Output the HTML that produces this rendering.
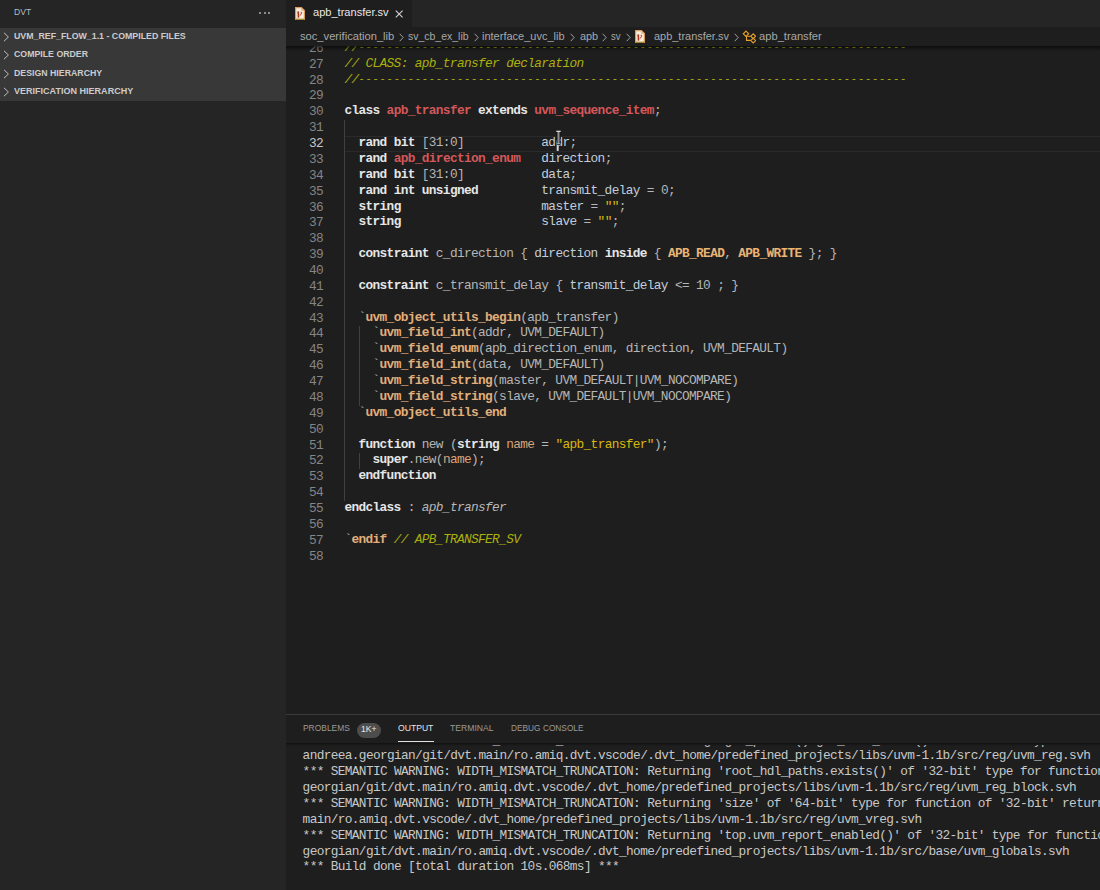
<!DOCTYPE html><html><head><meta charset="utf-8"><style>
*{box-sizing:border-box}
html,body{margin:0;padding:0}
body{width:1100px;height:890px;overflow:hidden;background:#1e1e1e;position:relative;font-family:"Liberation Sans",sans-serif}
.abs{position:absolute}
.ui{position:absolute;white-space:pre;transform-origin:0 0;line-height:1}
#side{left:0;top:0;width:286px;height:890px;background:#252526}
#secs{left:0;top:28px;width:286px;height:73px;background:#383838}
#tabs{left:286px;top:0;width:814px;height:27px;background:#252526}
#tab{left:286px;top:0;width:125.5px;height:27px;background:#1e1e1e}
#crumb{left:286px;top:27px;width:814px;height:19px;background:#1e1e1e}
#ed{left:286px;top:46px;width:814px;height:668px;overflow:hidden;background:#1e1e1e}
.ln{position:absolute;left:0;width:37px;text-align:right;font-family:"Liberation Mono",monospace;font-size:12.8px;letter-spacing:-0.6472px;color:#858585;height:15.87px;line-height:15.87px}
.cl{position:absolute;left:58.39999999999998px;white-space:pre;font-family:"Liberation Mono",monospace;font-size:12.8px;letter-spacing:-0.6472px;height:15.87px;line-height:15.87px;color:#bcbcbc}
.k{color:#e6e6e6;font-weight:bold}
.t{color:#d4575a;font-weight:bold}
.c{color:#abb00e;font-style:italic}
.m{color:#e2af7a;font-weight:bold}
.p{color:#b6b6b6}
.v{color:#c2cedb}
.s{color:#d8b80c}
.n{color:#d8a47c}
.e{color:#eab474;font-weight:bold}
.i{color:#b8b8b8;font-style:italic}
.d{font-size:10.5px;letter-spacing:0.7331px;font-style:normal;position:relative;top:-0.6px}
#panel{left:286px;top:714px;width:814px;height:176px;background:#1e1e1e;border-top:1px solid #3c3c3c}
#out{left:286px;top:744.5px;width:814px;height:145.5px;overflow:hidden}
.ol{position:absolute;left:16.6px;white-space:pre;font-family:"Liberation Mono",monospace;font-size:12.8px;letter-spacing:-0.6472px;height:15.87px;line-height:15.87px;color:#c8c8c8}
.shadow{position:absolute;left:286px;width:814px;height:5px;background:linear-gradient(#00000090,#00000000)}
</style></head><body>
<div id="side" class="abs"></div>
<div class="ui" style="left:13.6px;top:7.1px;font-size:9.4px;font-weight:400;color:#bbbbbb;transform:scaleX(0.9149);">DVT</div>
<div class="abs" style="left:259.2px;top:12.1px;width:1.9px;height:1.9px;background:#acacac;border-radius:1px"></div>
<div class="abs" style="left:263.7px;top:12.1px;width:1.9px;height:1.9px;background:#acacac;border-radius:1px"></div>
<div class="abs" style="left:268.2px;top:12.1px;width:1.9px;height:1.9px;background:#acacac;border-radius:1px"></div>
<div id="secs" class="abs"></div>
<svg class="abs" style="left:2.6px;top:31.90px" width="7" height="10" viewBox="0 0 7 10"><path d="M1 0.8 L5.4 5 L1 9.2" fill="none" stroke="#c0c0c0" stroke-width="1"/></svg>
<div class="ui" style="left:13.6px;top:30.9px;font-size:9.6px;font-weight:700;color:#cccccc;transform:scaleX(0.9176);">UVM_REF_FLOW_1.1 - COMPILED FILES</div>
<svg class="abs" style="left:2.6px;top:50.20px" width="7" height="10" viewBox="0 0 7 10"><path d="M1 0.8 L5.4 5 L1 9.2" fill="none" stroke="#c0c0c0" stroke-width="1"/></svg>
<div class="ui" style="left:13.6px;top:49.2px;font-size:9.6px;font-weight:700;color:#cccccc;transform:scaleX(0.9140);">COMPILE ORDER</div>
<svg class="abs" style="left:2.6px;top:68.50px" width="7" height="10" viewBox="0 0 7 10"><path d="M1 0.8 L5.4 5 L1 9.2" fill="none" stroke="#c0c0c0" stroke-width="1"/></svg>
<div class="ui" style="left:13.6px;top:67.5px;font-size:9.6px;font-weight:700;color:#cccccc;transform:scaleX(0.9135);">DESIGN HIERARCHY</div>
<svg class="abs" style="left:2.6px;top:86.80px" width="7" height="10" viewBox="0 0 7 10"><path d="M1 0.8 L5.4 5 L1 9.2" fill="none" stroke="#c0c0c0" stroke-width="1"/></svg>
<div class="ui" style="left:13.6px;top:85.80000000000001px;font-size:9.6px;font-weight:700;color:#cccccc;transform:scaleX(0.9411);">VERIFICATION HIERARCHY</div>
<div id="tabs" class="abs"></div>
<div id="tab" class="abs"></div>
<svg class="abs" style="left:295px;top:7px" width="10" height="13" viewBox="0 0 10 13"><path d="M0.6 0.6 H6.4 L9.4 3.6 V12.4 H0.6 Z" fill="#f6eddc" stroke="#dc9a58" stroke-width="1.2"/><path d="M6.2 0.8 V3.8 H9.2 Z" fill="#e6b482" stroke="none"/><path d="M3.3 4.6 L3.5 10.6" stroke="#a8301e" stroke-width="1.6" fill="none"/><path d="M2.3 5 H3.6" stroke="#b8402a" stroke-width="0.9" fill="none"/><path d="M5.6 5.3 Q7 4.9 6.7 6 L5.2 8.6" stroke="#c04030" stroke-width="1" fill="none"/><path d="M0.6 12.3 H9.4" stroke="#8a7a20" stroke-width="0.9"/></svg>
<div class="ui" style="left:312.6px;top:7.3px;font-size:10.6px;font-weight:400;color:#e8e8e8;transform:scaleX(1.0445);">apb_transfer.sv</div>
<svg class="abs" style="left:394.6px;top:9.6px" width="8.5" height="8" viewBox="0 0 8.5 8"><path d="M0.8 0.6 L7.6 7.4 M7.6 0.6 L0.8 7.4" stroke="#d0d0d0" stroke-width="1.15"/></svg>
<div id="crumb" class="abs"></div>
<div class="ui" style="left:299.6px;top:31.6px;font-size:10.2px;font-weight:400;color:#a8a8a8;transform:scaleX(1.0953);">soc_verification_lib</div>
<div class="ui" style="left:407.6px;top:31.6px;font-size:10.2px;font-weight:400;color:#a8a8a8;transform:scaleX(1.0277);">sv_cb_ex_lib</div>
<div class="ui" style="left:482.3px;top:31.6px;font-size:10.2px;font-weight:400;color:#a8a8a8;transform:scaleX(1.0803);">interface_uvc_lib</div>
<div class="ui" style="left:579.5px;top:31.6px;font-size:10.2px;font-weight:400;color:#a8a8a8;transform:scaleX(1.0691);">apb</div>
<div class="ui" style="left:611.4px;top:31.6px;font-size:10.2px;font-weight:400;color:#a8a8a8;transform:scaleX(0.9412);">sv</div>
<div class="ui" style="left:653.6px;top:31.6px;font-size:10.2px;font-weight:400;color:#a8a8a8;transform:scaleX(1.0754);">apb_transfer.sv</div>
<div class="ui" style="left:758.6px;top:31.6px;font-size:10.2px;font-weight:400;color:#a8a8a8;transform:scaleX(1.0963);">apb_transfer</div>
<svg class="abs" style="left:399.0px;top:32.5px" width="5" height="9" viewBox="0 0 5 9"><path d="M0.7 0.8 L4.2 4.5 L0.7 8.2" fill="none" stroke="#a0a0a0" stroke-width="1"/></svg>
<svg class="abs" style="left:473.6px;top:32.5px" width="5" height="9" viewBox="0 0 5 9"><path d="M0.7 0.8 L4.2 4.5 L0.7 8.2" fill="none" stroke="#a0a0a0" stroke-width="1"/></svg>
<svg class="abs" style="left:570.0px;top:32.5px" width="5" height="9" viewBox="0 0 5 9"><path d="M0.7 0.8 L4.2 4.5 L0.7 8.2" fill="none" stroke="#a0a0a0" stroke-width="1"/></svg>
<svg class="abs" style="left:602.4px;top:32.5px" width="5" height="9" viewBox="0 0 5 9"><path d="M0.7 0.8 L4.2 4.5 L0.7 8.2" fill="none" stroke="#a0a0a0" stroke-width="1"/></svg>
<svg class="abs" style="left:626.0px;top:32.5px" width="5" height="9" viewBox="0 0 5 9"><path d="M0.7 0.8 L4.2 4.5 L0.7 8.2" fill="none" stroke="#a0a0a0" stroke-width="1"/></svg>
<svg class="abs" style="left:734.0px;top:32.5px" width="5" height="9" viewBox="0 0 5 9"><path d="M0.7 0.8 L4.2 4.5 L0.7 8.2" fill="none" stroke="#a0a0a0" stroke-width="1"/></svg>
<svg class="abs" style="left:635px;top:30px" width="10" height="13" viewBox="0 0 10 13"><path d="M0.6 0.6 H6.4 L9.4 3.6 V12.4 H0.6 Z" fill="#f6eddc" stroke="#dc9a58" stroke-width="1.2"/><path d="M6.2 0.8 V3.8 H9.2 Z" fill="#e6b482" stroke="none"/><path d="M3.3 4.6 L3.5 10.6" stroke="#a8301e" stroke-width="1.6" fill="none"/><path d="M2.3 5 H3.6" stroke="#b8402a" stroke-width="0.9" fill="none"/><path d="M5.6 5.3 Q7 4.9 6.7 6 L5.2 8.6" stroke="#c04030" stroke-width="1" fill="none"/><path d="M0.6 12.3 H9.4" stroke="#8a7a20" stroke-width="0.9"/></svg>
<svg class="abs" style="left:742px;top:30px" width="14" height="14" viewBox="0 0 14 14"><g fill="none" stroke="#e8a02a" stroke-width="1.1"><path d="M4 1.1 L6.7 3.8 L4 6.5 L1.3 3.8 Z"/><path d="M11.2 3.8 L13.6 6.2 L11.2 8.6 L8.8 6.2 Z"/><path d="M11.2 8.2 L13.6 10.6 L11.2 13 L8.8 10.6 Z"/><path d="M4.5 6 V10.4 H8.8 M5.2 6.3 H8.8"/></g></svg>
<div id="ed" class="abs">
<div class="abs" style="left:59px;top:90.05px;width:760px;height:15.87px;border-top:1.5px solid #2a2a2a;border-bottom:1.5px solid #2a2a2a"></div>
<div class="abs" style="left:58.4px;top:74.18px;width:1px;height:380.88px;background:#404040"></div>
<div class="abs" style="left:72.5px;top:280.49px;width:1px;height:79.35px;background:#404040"></div>
<div class="abs" style="left:72.5px;top:407.45px;width:1px;height:15.87px;background:#404040"></div>
<div class="ln" style="top:-5.170px;color:#858585">26</div>
<div class="cl" style="top:-6.170px"><span class="c">//</span><span class="c d">------------------------------------------------------------------------------</span></div>
<div class="ln" style="top:10.700px;color:#858585">27</div>
<div class="cl" style="top:9.700px"><span class="c">// CLASS: apb_transfer declaration</span></div>
<div class="ln" style="top:26.570px;color:#858585">28</div>
<div class="cl" style="top:25.570px"><span class="c">//</span><span class="c d">------------------------------------------------------------------------------</span></div>
<div class="ln" style="top:42.440px;color:#858585">29</div>
<div class="cl" style="top:41.440px"></div>
<div class="ln" style="top:58.310px;color:#858585">30</div>
<div class="cl" style="top:57.310px"><span class="k">class</span><span class="p"> </span><span class="t">apb_transfer</span><span class="p"> </span><span class="k">extends</span><span class="p"> </span><span class="t">uvm_sequence_item</span><span class="p">;</span></div>
<div class="ln" style="top:74.180px;color:#858585">31</div>
<div class="cl" style="top:73.180px"></div>
<div class="ln" style="top:90.050px;color:#c6c6c6">32</div>
<div class="cl" style="top:89.050px"><span class="p">  </span><span class="k">rand bit</span><span class="p"> [31:0]           </span><span class="v">addr</span><span class="p">;</span></div>
<div class="ln" style="top:105.920px;color:#858585">33</div>
<div class="cl" style="top:104.920px"><span class="p">  </span><span class="k">rand</span><span class="p"> </span><span class="t">apb_direction_enum</span><span class="p">   </span><span class="v">direction</span><span class="p">;</span></div>
<div class="ln" style="top:121.790px;color:#858585">34</div>
<div class="cl" style="top:120.790px"><span class="p">  </span><span class="k">rand bit</span><span class="p"> [31:0]           </span><span class="v">data</span><span class="p">;</span></div>
<div class="ln" style="top:137.660px;color:#858585">35</div>
<div class="cl" style="top:136.660px"><span class="p">  </span><span class="k">rand int unsigned</span><span class="p">         </span><span class="v">transmit_delay</span><span class="p"> = 0;</span></div>
<div class="ln" style="top:153.530px;color:#858585">36</div>
<div class="cl" style="top:152.530px"><span class="p">  </span><span class="k">string</span><span class="p">                    </span><span class="v">master</span><span class="p"> = </span><span class="s">&quot;&quot;</span><span class="p">;</span></div>
<div class="ln" style="top:169.400px;color:#858585">37</div>
<div class="cl" style="top:168.400px"><span class="p">  </span><span class="k">string</span><span class="p">                    </span><span class="v">slave</span><span class="p"> = </span><span class="s">&quot;&quot;</span><span class="p">;</span></div>
<div class="ln" style="top:185.270px;color:#858585">38</div>
<div class="cl" style="top:184.270px"></div>
<div class="ln" style="top:201.140px;color:#858585">39</div>
<div class="cl" style="top:200.140px"><span class="p">  </span><span class="k">constraint</span><span class="p"> c_direction { </span><span class="v">direction</span><span class="p"> </span><span class="k">inside</span><span class="p"> { </span><span class="e">APB_READ</span><span class="p">, </span><span class="e">APB_WRITE</span><span class="p"> }; }</span></div>
<div class="ln" style="top:217.010px;color:#858585">40</div>
<div class="cl" style="top:216.010px"></div>
<div class="ln" style="top:232.880px;color:#858585">41</div>
<div class="cl" style="top:231.880px"><span class="p">  </span><span class="k">constraint</span><span class="p"> c_transmit_delay { </span><span class="v">transmit_delay</span><span class="p"> &lt;= 10 ; }</span></div>
<div class="ln" style="top:248.750px;color:#858585">42</div>
<div class="cl" style="top:247.750px"></div>
<div class="ln" style="top:264.620px;color:#858585">43</div>
<div class="cl" style="top:263.620px"><span class="p">  `</span><span class="m">uvm_object_utils_begin</span><span class="p">(apb_transfer)</span></div>
<div class="ln" style="top:280.490px;color:#858585">44</div>
<div class="cl" style="top:279.490px"><span class="p">    `</span><span class="m">uvm_field_int</span><span class="p">(addr, UVM_DEFAULT)</span></div>
<div class="ln" style="top:296.360px;color:#858585">45</div>
<div class="cl" style="top:295.360px"><span class="p">    `</span><span class="m">uvm_field_enum</span><span class="p">(apb_direction_enum, direction, UVM_DEFAULT)</span></div>
<div class="ln" style="top:312.230px;color:#858585">46</div>
<div class="cl" style="top:311.230px"><span class="p">    `</span><span class="m">uvm_field_int</span><span class="p">(data, UVM_DEFAULT)</span></div>
<div class="ln" style="top:328.100px;color:#858585">47</div>
<div class="cl" style="top:327.100px"><span class="p">    `</span><span class="m">uvm_field_string</span><span class="p">(master, UVM_DEFAULT|UVM_NOCOMPARE)</span></div>
<div class="ln" style="top:343.970px;color:#858585">48</div>
<div class="cl" style="top:342.970px"><span class="p">    `</span><span class="m">uvm_field_string</span><span class="p">(slave, UVM_DEFAULT|UVM_NOCOMPARE)</span></div>
<div class="ln" style="top:359.840px;color:#858585">49</div>
<div class="cl" style="top:358.840px"><span class="p">  `</span><span class="m">uvm_object_utils_end</span></div>
<div class="ln" style="top:375.710px;color:#858585">50</div>
<div class="cl" style="top:374.710px"></div>
<div class="ln" style="top:391.580px;color:#858585">51</div>
<div class="cl" style="top:390.580px"><span class="p">  </span><span class="k">function</span><span class="p"> new (</span><span class="k">string</span><span class="p"> </span><span class="n">name</span><span class="p"> = </span><span class="s">&quot;apb_transfer&quot;</span><span class="p">);</span></div>
<div class="ln" style="top:407.450px;color:#858585">52</div>
<div class="cl" style="top:406.450px"><span class="p">    </span><span class="k">super</span><span class="p">.new(</span><span class="n">name</span><span class="p">);</span></div>
<div class="ln" style="top:423.320px;color:#858585">53</div>
<div class="cl" style="top:422.320px"><span class="p">  </span><span class="k">endfunction</span></div>
<div class="ln" style="top:439.190px;color:#858585">54</div>
<div class="cl" style="top:438.190px"></div>
<div class="ln" style="top:455.060px;color:#858585">55</div>
<div class="cl" style="top:454.060px"><span class="k">endclass</span><span class="p"> : </span><span class="i">apb_transfer</span></div>
<div class="ln" style="top:470.930px;color:#858585">56</div>
<div class="cl" style="top:469.930px"></div>
<div class="ln" style="top:486.800px;color:#858585">57</div>
<div class="cl" style="top:485.800px"><span class="p">`</span><span class="m">endif</span><span class="p"> </span><span class="c">// APB_TRANSFER_SV</span></div>
<div class="ln" style="top:502.670px;color:#858585">58</div>
<div class="cl" style="top:501.670px"></div>
</div>
<div class="shadow" style="top:46px"></div>
<svg class="abs" style="left:554.5px;top:130px" width="7" height="22" viewBox="0 0 7 22"><rect x="1.6" y="1.6" width="3.8" height="12.4" fill="#0c0c0c"/><rect x="2.4" y="2" width="2.2" height="11.6" fill="#8c8c8c"/><rect x="1.3" y="0.7" width="4.4" height="1.3" fill="#d8d8d8"/><rect x="1.6" y="13.3" width="3.8" height="1.1" fill="#c8c8c8"/><rect x="1.6" y="14.4" width="3.8" height="0.9" fill="#0c0c0c"/><rect x="1.7" y="15.1" width="2" height="5.8" fill="#d8d8d8"/></svg>
<div id="panel" class="abs"></div>
<div class="ui" style="left:302.9px;top:724.4px;font-size:9.1px;font-weight:400;color:#9a9a9a;transform:scaleX(0.9273);">PROBLEMS</div>
<div class="abs" style="left:357px;top:722.5px;width:24px;height:15.3px;border-radius:8px;background:#4d4d4d"></div>
<div class="ui" style="left:361.2px;top:725px;font-size:8.6px;font-weight:400;color:#e8e8e8;transform:scaleX(0.9969);">1K+</div>
<div class="ui" style="left:397.6px;top:724.4px;font-size:9.1px;font-weight:400;color:#e7e7e7;transform:scaleX(0.9463);">OUTPUT</div>
<div class="abs" style="left:397.6px;top:740.6px;width:36px;height:1.3px;background:#e0e0e0"></div>
<div class="ui" style="left:450.4px;top:724.4px;font-size:9.1px;font-weight:400;color:#9a9a9a;transform:scaleX(0.9476);">TERMINAL</div>
<div class="ui" style="left:511.4px;top:724.4px;font-size:9.1px;font-weight:400;color:#9a9a9a;transform:scaleX(0.9144);">DEBUG CONSOLE</div>
<div id="out" class="abs">
<div class="ol" style="top:-11.970px">*** SEMANTIC WARNING: WIDTH_MISMATCH_TRUNCATION: Returning &#x27;get_parent().get_root_block()&#x27; of &#x27;32-bit&#x27; type for function of &#x27;int&#x27; return type</div>
<div class="ol" style="top:3.900px">andreea.georgian/git/dvt.main/ro.amiq.dvt.vscode/.dvt_home/predefined_projects/libs/uvm-1.1b/src/reg/uvm_reg.svh</div>
<div class="ol" style="top:19.770px">*** SEMANTIC WARNING: WIDTH_MISMATCH_TRUNCATION: Returning &#x27;root_hdl_paths.exists()&#x27; of &#x27;32-bit&#x27; type for function of &#x27;int&#x27; return type</div>
<div class="ol" style="top:35.640px">georgian/git/dvt.main/ro.amiq.dvt.vscode/.dvt_home/predefined_projects/libs/uvm-1.1b/src/reg/uvm_reg_block.svh</div>
<div class="ol" style="top:51.510px">*** SEMANTIC WARNING: WIDTH_MISMATCH_TRUNCATION: Returning &#x27;size&#x27; of &#x27;64-bit&#x27; type for function of &#x27;32-bit&#x27; return type</div>
<div class="ol" style="top:67.380px">main/ro.amiq.dvt.vscode/.dvt_home/predefined_projects/libs/uvm-1.1b/src/reg/uvm_vreg.svh</div>
<div class="ol" style="top:83.250px">*** SEMANTIC WARNING: WIDTH_MISMATCH_TRUNCATION: Returning &#x27;top.uvm_report_enabled()&#x27; of &#x27;32-bit&#x27; type for function of &#x27;bit&#x27; return type</div>
<div class="ol" style="top:99.120px">georgian/git/dvt.main/ro.amiq.dvt.vscode/.dvt_home/predefined_projects/libs/uvm-1.1b/src/base/uvm_globals.svh</div>
<div class="ol" style="top:114.990px">*** Build done [total duration 10s.068ms] ***</div>
</div>
<div class="shadow" style="top:743px;height:3px;background:linear-gradient(#00000070,#00000000)"></div>
</body></html>
